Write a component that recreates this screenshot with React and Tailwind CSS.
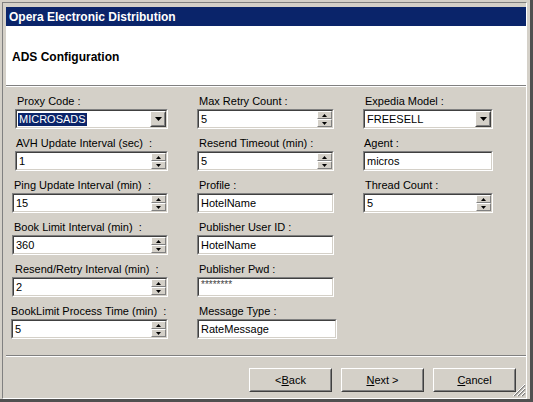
import React from "react";

const COL1 = [
  { label: "Proxy Code :", lc: "pl-[11px]", bc: "ml-[9px] w-[153px]", type: "select", value: "MICROSADS", sel: true },
  { label: "AVH Update Interval (sec)\u00a0 :", lc: "pl-[10px]", bc: "ml-[9px] w-[153px]", type: "spin", value: "1" },
  { label: "Ping Update Interval (min)\u00a0 :", lc: "pl-[8px]", bc: "ml-[6px] w-[156px]", type: "spin", value: "15" },
  { label: "Book Limit Interval (min)\u00a0 :", lc: "pl-[8px]", bc: "ml-[6px] w-[156px]", type: "spin", value: "360" },
  { label: "Resend/Retry Interval (min)\u00a0 :", lc: "pl-[9px]", bc: "ml-[6px] w-[156px]", type: "spin", value: "2" },
  { label: "BookLimit Process Time (min)\u00a0 :", lc: "pl-[5px]", bc: "ml-[5px] w-[157px]", type: "spin", value: "5" },
];

const COL2 = [
  { label: "Max Retry Count :", lc: "pl-[9px]", bc: "ml-[7px] w-[137px]", type: "spin", value: "5" },
  { label: "Resend Timeout (min) :", lc: "pl-[9px]", bc: "ml-[7px] w-[137px]", type: "spin", value: "5" },
  { label: "Profile :", lc: "pl-[9px]", bc: "ml-[7px] w-[137px]", type: "text", value: "HotelName" },
  { label: "Publisher User ID :", lc: "pl-[9px]", bc: "ml-[7px] w-[137px]", type: "text", value: "HotelName" },
  { label: "Publisher Pwd :", lc: "pl-[9px]", bc: "ml-[7px] w-[137px]", type: "pwd", value: "********" },
  { label: "Message Type :", lc: "pl-[9px]", bc: "ml-[7px] w-[140px]", type: "text", value: "RateMessage" },
];

const COL3 = [
  { label: "Expedia Model :", lc: "pl-[8px]", bc: "ml-[6px] w-[130px]", type: "select", value: "FREESELL" },
  { label: "Agent :", lc: "pl-[7px]", bc: "ml-[6px] w-[130px]", type: "text", value: "micros" },
  { label: "Thread Count :", lc: "pl-[8px]", bc: "ml-[6px] w-[130px]", type: "spin", value: "5" },
];

function Raised({ className = "", children }) {
  return (
    <div className={`bg-[#d4d0c8] border border-t-white border-l-white border-r-[#404040] border-b-[#404040] ${className}`}>
      <div className="h-full w-full border border-t-[#d4d0c8] border-l-[#d4d0c8] border-r-[#808080] border-b-[#808080] flex items-center justify-center">
        {children}
      </div>
    </div>
  );
}

function Spinner() {
  return (
    <div className="w-[15px] h-full flex flex-col shrink-0">
      <div className="flex-1 bg-[#d4d0c8] border-t border-l border-t-white border-l-white border-r border-b border-r-[#808080] border-b-[#808080] flex items-center justify-center">
        <svg width="5" height="3" viewBox="0 0 5 3"><path d="M2.5 0 L5 3 L0 3 Z" fill="#000" /></svg>
      </div>
      <div className="flex-1 bg-[#d4d0c8] border-t border-l border-t-white border-l-white border-r border-b border-r-[#808080] border-b-[#808080] flex items-center justify-center">
        <svg width="5" height="3" viewBox="0 0 5 3"><path d="M0 0 L5 0 L2.5 3 Z" fill="#000" /></svg>
      </div>
    </div>
  );
}

function Field({ f }) {
  return (
    <div className="flex flex-col">
      <div className={`h-[13px] leading-[13px] text-[11px] text-black whitespace-nowrap mb-[1px] ${f.lc}`}>{f.label}</div>
      <div className={`h-[20px] border border-t-[#808080] border-l-[#808080] border-r-white border-b-white ${f.bc}`}>
        <div className="h-full border border-t-[#404040] border-l-[#404040] border-r-[#d4d0c8] border-b-[#d4d0c8] bg-white flex items-stretch">
          <div className="flex-1 flex items-center pl-[1px] text-[11px] text-black overflow-hidden whitespace-nowrap">
            {f.sel ? (
              <span className="bg-[#0a246a] text-white px-[1px] leading-[13px]">{f.value}</span>
            ) : f.type === "pwd" ? (
              <span className="pl-[1px] text-[#444] text-[10px] self-start pt-[1px] leading-[10px]">{f.value}</span>
            ) : (
              <span className="pl-[1px]">{f.value}</span>
            )}
          </div>
          {f.type === "spin" && <Spinner />}
          {f.type === "select" && (
            <Raised className="w-[16px] h-full shrink-0">
              <svg width="7" height="4" viewBox="0 0 7 4"><path d="M0 0 L7 0 L3.5 4 Z" fill="#000" /></svg>
            </Raised>
          )}
        </div>
      </div>
    </div>
  );
}

function Button({ pre = "", u, post }) {
  return (
    <Raised className="w-[83px] h-[24px]">
      <span className="text-[11px] text-black">
        {pre}
        <span className="underline">{u}</span>
        {post}
      </span>
    </Raised>
  );
}

export default function App() {
  return (
    <div className="w-[533px] h-[402px] bg-[#d4d0c8] pl-[2px] pt-[2px] pr-[3px] border-r-[3px] border-b-[3px] border-r-[#505050] border-b-[#505050] font-['Liberation_Sans',Arial,sans-serif] overflow-hidden">
      <div className="h-full border border-t-[#808080] border-l-[#808080] border-r-white border-b-white pl-[3px] pt-[4px] relative">
        {/* title bar */}
        <div className="h-[19px] bg-[#0a246a] pl-[3px] flex items-center text-white font-bold text-[12px]">
          Opera Electronic Distribution
        </div>

        {/* header */}
        <div className="h-[59px] bg-white pl-[6px] pt-[24px]">
          <div className="text-[12px] leading-[14px] font-bold text-black">ADS Configuration</div>
        </div>
        <div className="h-[1px] bg-[#808080]" />
        <div className="h-[1px] bg-white" />

        {/* form */}
        <div className="h-[268px] flex pt-[8px]">
          <div className="w-[184px] flex flex-col gap-[8px]">
            {COL1.map((f) => <Field key={f.label} f={f} />)}
          </div>
          <div className="w-[167px] flex flex-col gap-[8px]">
            {COL2.map((f) => <Field key={f.label} f={f} />)}
          </div>
          <div className="w-[150px] flex flex-col gap-[8px]">
            {COL3.map((f) => <Field key={f.label} f={f} />)}
          </div>
        </div>

        <div className="h-[1px] bg-[#808080]" />
        <div className="h-[1px] bg-white" />

        {/* buttons */}
        <div className="flex justify-end gap-[9px] pt-[11px] pr-[10px]">
          <Button pre="<" u="B" post="ack" />
          <Button u="N" post="ext >" />
          <Button u="C" post="ancel" />
        </div>

        {/* resize grip */}
        <svg className="absolute right-[0px] bottom-[1px]" width="13" height="13" viewBox="0 0 13 13">
          <path d="M12 1 L1 12 M12 5 L5 12 M12 9 L9 12" stroke="#808080" strokeWidth="1.4" />
          <path d="M12 0 L0 12 M12 4 L4 12 M12 8 L8 12" stroke="#ffffff" strokeWidth="1" />
        </svg>
      </div>
    </div>
  );
}
